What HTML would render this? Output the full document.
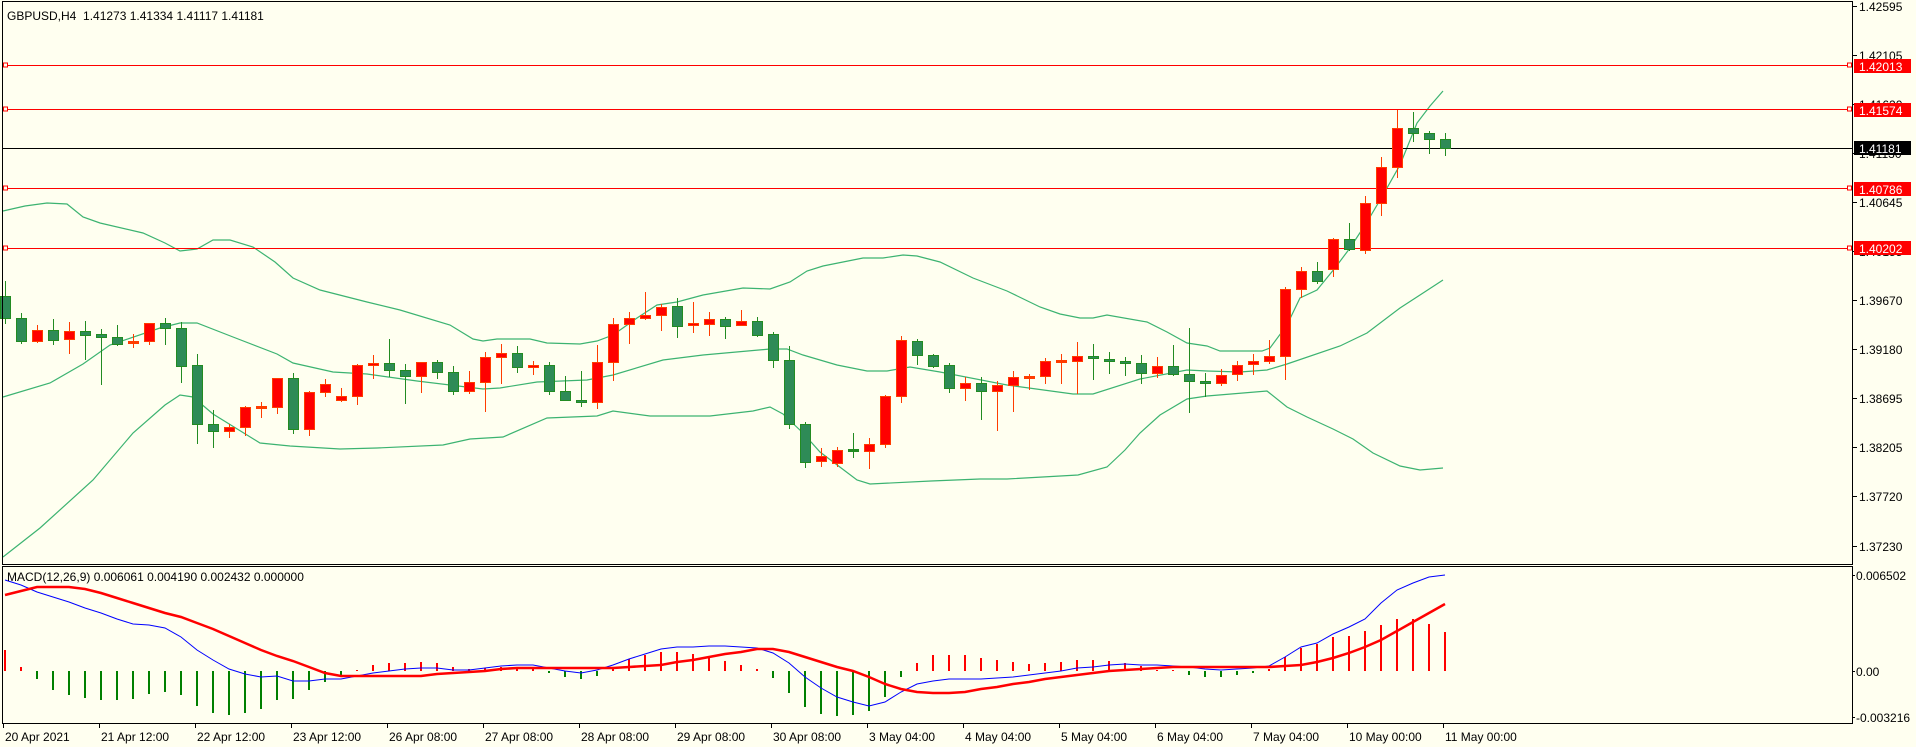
<!DOCTYPE html>
<html><head><meta charset="utf-8"><style>
html,body{margin:0;padding:0;background:#fffff0;}
body{width:1916px;height:747px;overflow:hidden;}
svg{display:block;font-family:"Liberation Sans",sans-serif;}
</style></head><body>
<svg id="s" width="1916" height="747" xmlns="http://www.w3.org/2000/svg" shape-rendering="crispEdges">
<rect width="1916" height="747" fill="#fffff0"/>
<g id="g"></g>
</svg>
<script>
var NS="http://www.w3.org/2000/svg",g=document.getElementById('g'),out='';
function L(x1,y1,x2,y2,c,w){out+='<line x1="'+x1+'" y1="'+y1+'" x2="'+x2+'" y2="'+y2+'" stroke="'+c+'" stroke-width="'+(w||1)+'"/>';}
function R(x,y,w,h,f,s){out+='<rect x="'+x+'" y="'+y+'" width="'+w+'" height="'+h+'" fill="'+f+'"'+(s?' stroke="'+s+'"':'')+'/>';}
function T(x,y,t,c,a){out+='<text x="'+x+'" y="'+y+'" font-size="12" fill="'+(c||'#000')+'"'+(a?' text-anchor="'+a+'"':'')+'>'+t+'</text>';}
function P(pts,c,w,smooth){var d='';for(var i=0;i<pts.length;i++){d+=(i?'L':'M')+pts[i][0]+' '+pts[i][1];}out+='<path d="'+d+'" fill="none" stroke="'+c+'" stroke-width="'+w+'" shape-rendering="auto"/>';}
var cx=function(i){return 5+16*i;};
// candles: type(1 up red,0 down green), wickTop, wickBot, bodyTop, bodyBot
var C=[[0,281,323,296,318],[0,313,343,318,341],[1,325,342,330,341],[0,319,344,330,340],[1,322,353,331,339],[0,321,359,331,335],[0,329,384,334,337],[0,325,345,337,344],[1,334,347,342,342],[1,323,344,323,341],
[0,318,344,323,328],[0,322,382,328,366],[0,354,443,365,424],[0,410,447,424,431],[1,424,437,427,431],[1,406,435,407,427],[1,402,417,407,407],[1,378,413,378,407],[0,373,433,378,429],[1,391,435,392,429],
[1,379,396,384,392],[1,388,401,396,400],[1,364,404,365,396],[1,355,378,363,365],[0,339,376,363,370],[0,364,403,370,376],[1,362,392,362,376],[0,360,378,362,372],[0,366,394,372,391],[1,371,393,382,391],
[1,352,411,357,382],[1,344,383,353,357],[0,346,372,353,367],[1,361,374,365,367],[0,362,394,365,391],[0,376,400,391,400],[0,371,406,400,402],[1,345,408,362,402],[1,318,380,324,362],[1,312,343,318,324],
[1,292,319,315,318],[1,304,330,307,315],[0,298,337,306,326],[1,302,332,323,325],[1,312,335,319,324],[0,317,338,319,326],[1,310,325,321,325],[0,317,336,321,335],[0,332,367,334,360],[0,346,428,360,424],
[0,422,467,424,462],[1,448,466,456,461],[1,447,466,450,463],[0,433,457,450,451],[1,438,468,444,451],[1,395,447,396,444],[1,336,402,340,396],[0,339,364,341,355],[0,354,367,355,366],[0,363,392,365,388],
[1,377,400,383,388],[0,377,419,383,391],[1,381,430,385,391],[1,371,411,377,385],[1,374,389,377,377],[1,358,383,361,376],[1,354,383,361,361],[1,342,393,356,361],[0,344,379,356,358],[0,352,373,359,361],
[0,357,375,361,363],[0,355,383,363,373],[1,357,377,366,373],[0,345,375,366,374],[0,328,412,374,381],[0,373,396,381,383],[1,369,385,375,383],[1,361,380,365,374],[1,354,374,361,364],[1,340,363,356,361],
[1,287,379,289,356],[1,267,297,271,289],[0,262,283,271,281],[1,238,276,239,269],[0,223,250,239,249],[1,196,253,203,250],[1,157,215,167,203],[1,110,177,128,167],[0,112,141,128,133],[0,131,153,133,139],[0,133,155,139,148]];
// bands
var UB=[[3,211],[25,206],[47,203],[67,204],[83,217],[100,223],[143,233],[165,243],[180,251],[197,249],[213,240],[230,240],[253,247],[275,262],[293,278],[320,290],[367,302],[400,310],[450,325],[473,339],[483,341],[497,339],[530,339],[547,343],[580,344],[597,341],[613,335],[637,318],[657,305],[677,302],[703,295],[743,288],[770,289],[790,282],[807,271],[823,266],[863,258],[883,258],[903,255],[917,256],[940,262],[973,278],[1007,291],[1040,307],[1060,314],[1080,318],[1093,318],[1107,315],[1147,322],[1167,332],[1187,343],[1207,346],[1220,351],[1262,351],[1270,348],[1287,325],[1300,298],[1317,290],[1335,268],[1350,248],[1367,222],[1383,195],[1400,165],[1417,123],[1430,106],[1443,91]];
var MB=[[3,397],[50,383],[83,364],[110,345],[160,328],[180,323],[197,323],[233,337],[277,354],[293,363],[333,372],[367,374],[417,381],[483,389],[500,388],[537,382],[587,380],[613,375],[663,360],[703,355],[770,349],[787,349],[803,355],[837,365],[867,371],[887,371],[910,367],[940,372],[1007,385],[1073,394],[1093,394],[1140,379],[1187,370],[1207,371],[1240,372],[1267,370],[1287,364],[1340,346],[1367,333],[1400,308],[1420,295],[1443,280]];
var LB=[[3,557],[40,528],[93,480],[133,433],[165,405],[180,395],[193,397],[213,414],[260,443],[290,446],[340,449],[377,448],[443,445],[470,439],[503,437],[547,418],[597,416],[613,411],[650,416],[710,416],[753,411],[770,407],[783,414],[803,433],[820,452],[857,480],[870,484],[931,481],[980,479],[1007,479],[1078,475],[1107,467],[1125,450],[1140,433],[1160,415],[1187,399],[1207,396],[1267,391],[1287,407],[1307,417],[1333,429],[1353,439],[1373,453],[1400,466],[1420,470],[1443,468]];
P(UB,'#3cb371',1.2);P(MB,'#3cb371',1.2);P(LB,'#3cb371',1.2);
// horizontal lines
[[65,'#ff0000'],[109,'#ff0000'],[188,'#ff0000'],[248,'#ff0000']].forEach(function(a){L(2,a[0]+.5,1852,a[0]+.5,a[1]);R(3.5,a[0]-2,4,4,'#fffff0','#ff0000');R(1847.5,a[0]-2,4,4,'#fffff0','#ff0000');});
L(2,148.5,1852,148.5,'#000');
// candles
C.forEach(function(c,i){var x=cx(i),col=c[0]?'#ff3c00':'#228b22',fill=c[0]?'#ff0000':'#2e8b57';
 L(x+.5,c[1],x+.5,c[2]+1,col,1.2);
 var h=c[4]-c[3];
 if(h<2){R(x-5,c[3]-1,11,3,col);}else{R(x-4.5,c[3]+.5,10,h,fill,col);}
});
// price axis
var labels=[['1.42595',6],['1.42105',55],['1.41620',104],['1.41130',153],['1.40645',202],['1.40155',251],['1.39670',300],['1.39180',349],['1.38695',398],['1.38205',447],['1.37720',496],['1.37230',546]];
labels.forEach(function(a){L(1852,a[1]+.5,1857,a[1]+.5,'#000');T(1859,a[1]+5,a[0]);});
[['1.42013',66,'#ff0000'],['1.41574',110,'#ff0000'],['1.41181',148,'#000'],['1.40786',189,'#ff0000'],['1.40202',248,'#ff0000']].forEach(function(a){R(1854,a[1]-7,57,14,a[2]);T(1859,a[1]+5,a[0],'#fff');});
// pane borders
R(2.5,1.5,1850,563,'none','#000');
R(2.5,566.5,1850,157,'none','#000');
T(7,20,'GBPUSD,H4&#160;&#160;1.41273 1.41334 1.41117 1.41181');
// MACD
var H=[650,667,679,690,695,698,700,700,699,694,692,695,706,713,715,713,709,700,699,690,682,677,670,665,663,663,662,663,667,669,668,667,667,668,673,677,679,676,667,659,655,652,652,654,657,661,665,669,678,693,707,714,716,715,711,697,677,663,655,655,655,658,660,662,664,663,662,660,660,661,663,666,670,671,675,677,677,675,673,669,657,648,644,637,636,631,625,619,619,624,632];
H.forEach(function(y,i){var x=cx(i);if(y<671){R(x-1,y,2,671-y,'#ff0000');}else if(y>671){R(x-1,671,2,y-671,'#008000');}else{R(x-1,670,2,1,'#ff0000');}});
var B=[580,585,592,597,602,608,613,619,624,625,628,637,650,660,669,674,677,676,681,681,679,679,676,673,671,669,668,668,670,670,668,666,665,665,668,671,673,670,665,659,654,649,647,647,646,646,647,648,653,663,677,688,697,702,706,702,692,684,681,679,679,679,678,677,675,673,671,668,667,665,664,665,665,666,667,669,670,669,668,666,657,647,643,634,627,619,603,590,583,577,575];
var S=[595,591,587,587,587,589,593,598,603,608,613,617,623,629,636,643,650,656,661,667,673,676,676,676,676,676,676,674,673,672,671,669,668,668,668,668,668,668,668,667,666,665,662,660,657,654,652,649,649,652,657,662,667,671,677,684,689,692,693,693,692,689,687,684,682,679,677,675,673,671,670,669,668,667,667,667,667,667,667,667,666,665,662,658,653,647,640,631,622,613,604];
P(B.map(function(y,i){return [cx(i),y];}),'#0000ff',1);
P(S.map(function(y,i){return [cx(i),y];}),'#ff0000',2.5);
T(7,581,'MACD(12,26,9) 0.006061 0.004190 0.002432 0.000000');
[['0.006502',575],['0.00',671],['-0.003216',717]].forEach(function(a){L(1852,a[1]+.5,1855,a[1]+.5,'#000');T(1856,a[1]+5,a[0]);});
// dates
var D=['20 Apr 2021','21 Apr 12:00','22 Apr 12:00','23 Apr 12:00','26 Apr 08:00','27 Apr 08:00','28 Apr 08:00','29 Apr 08:00','30 Apr 08:00','3 May 04:00','4 May 04:00','5 May 04:00','6 May 04:00','7 May 04:00','10 May 00:00','11 May 00:00'];
D.forEach(function(t,k){var x=3+96*k;L(x+.5,724,x+.5,728,'#000');T(x+2,741,t);});
g.innerHTML=out;
</script>
</body></html>
